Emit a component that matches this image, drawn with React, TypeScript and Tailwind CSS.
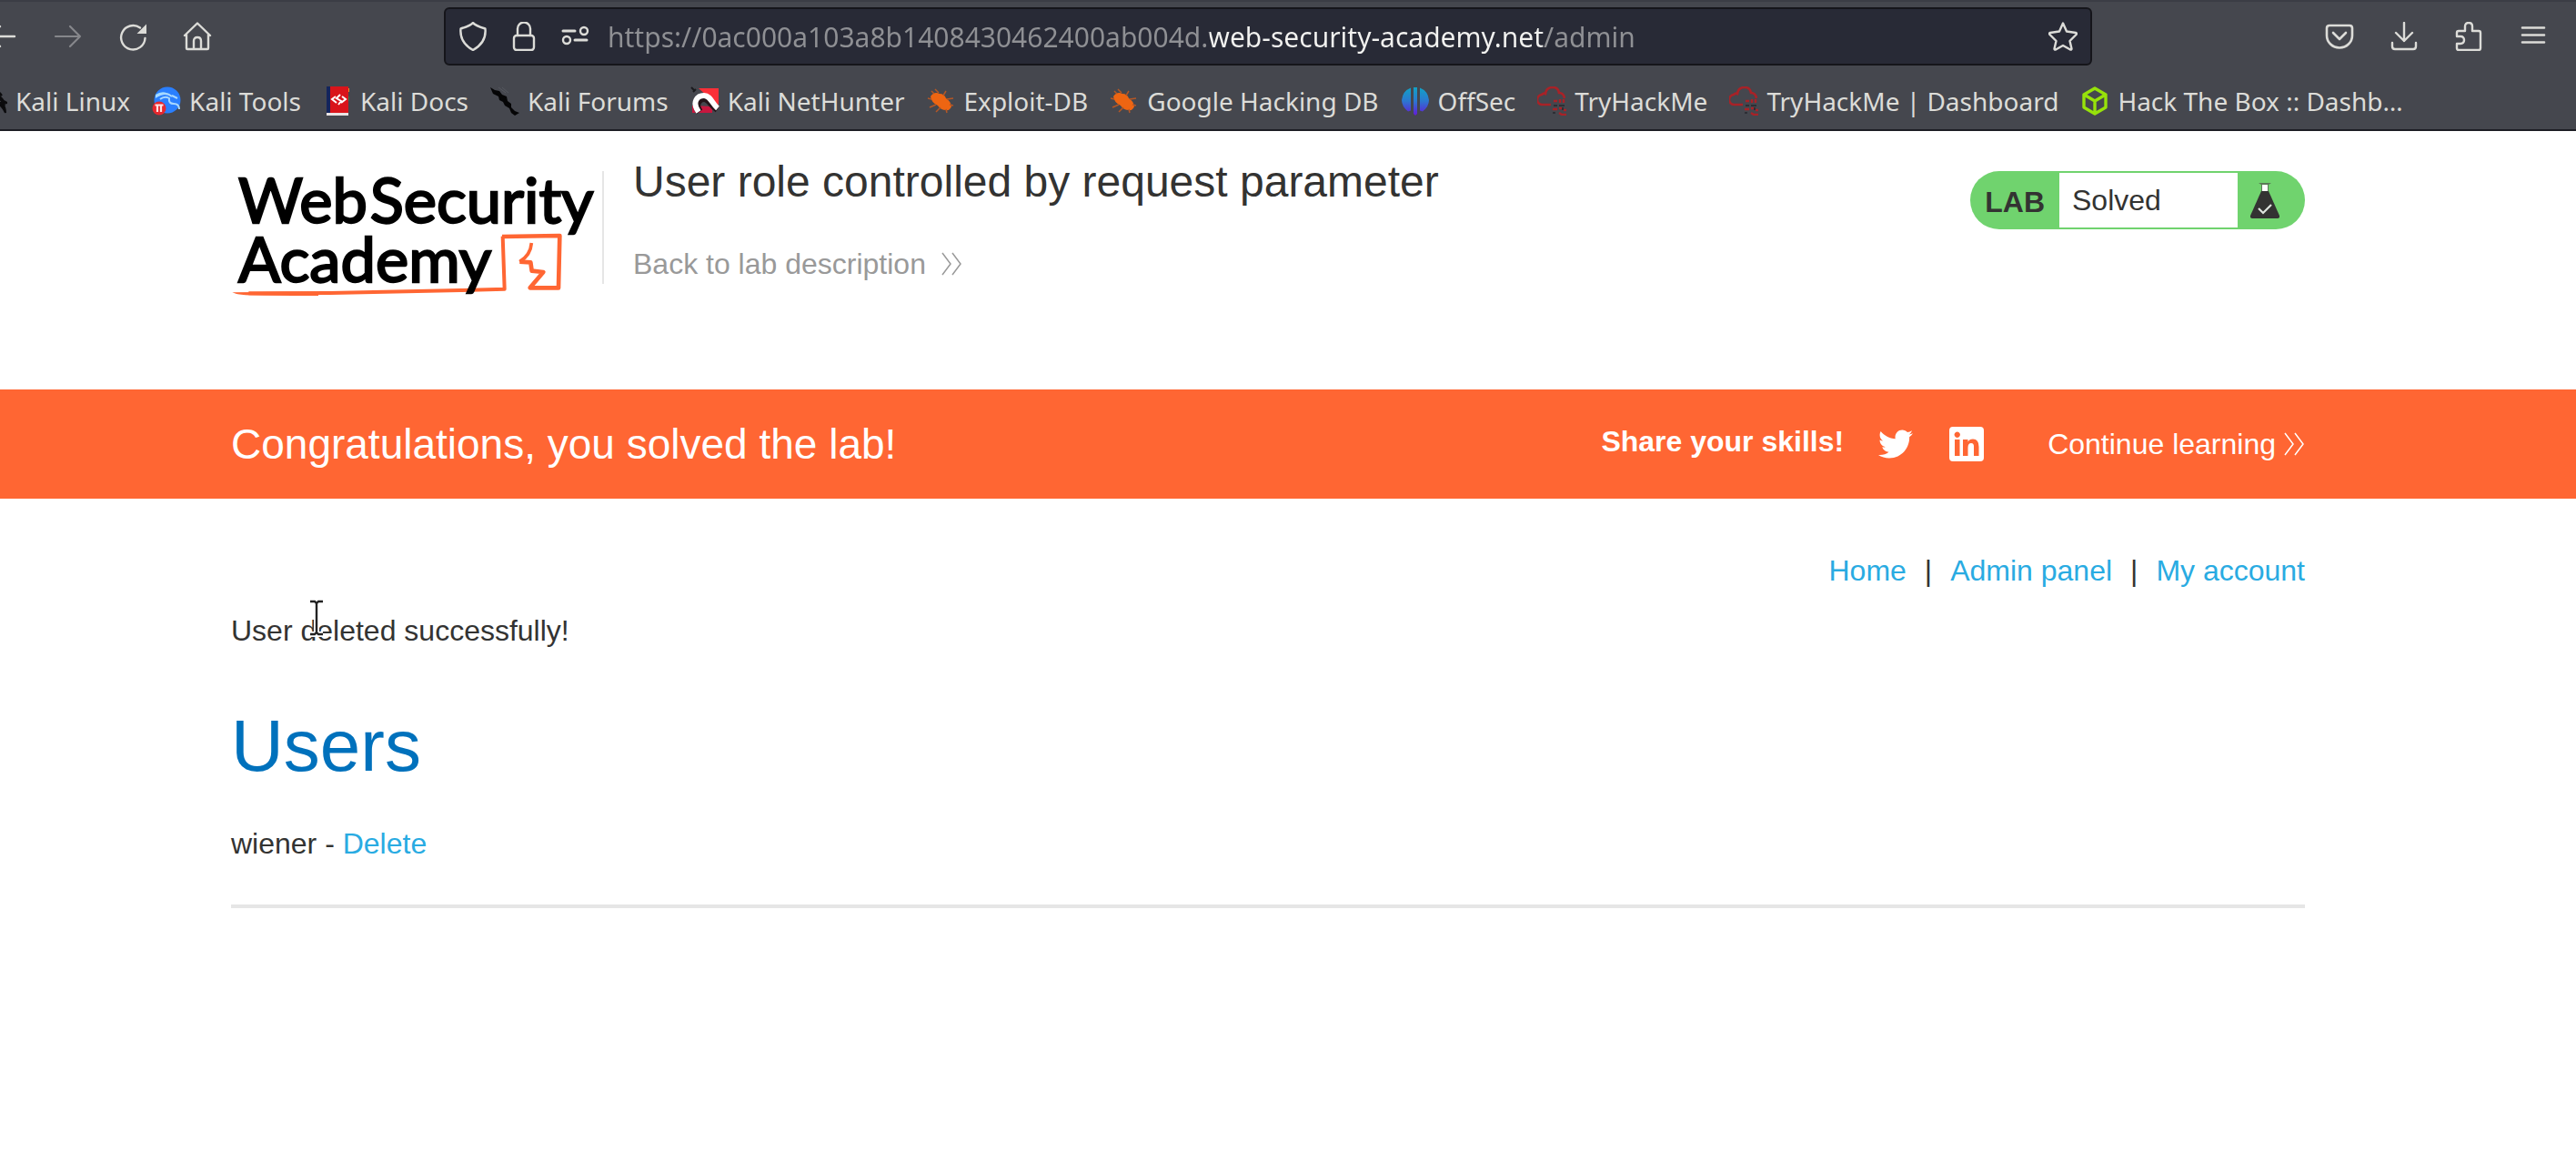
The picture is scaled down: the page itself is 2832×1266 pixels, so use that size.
import type { ReactNode } from "react";
import { FaTwitter } from "react-icons/fa";

const stroke = {
  fill: "none",
  stroke: "currentColor",
  strokeWidth: 2.4,
  strokeLinecap: "round" as const,
  strokeLinejoin: "round" as const,
};

function Icon({ children }: { children: ReactNode }) {
  return (
    <svg viewBox="0 0 32 32" className="size-8 shrink-0" aria-hidden="true">
      {children}
    </svg>
  );
}

const BackIcon = () => (
  <Icon>
    <path {...stroke} d="M28 16H2M12 5 1 16l11 11" />
  </Icon>
);
const ForwardIcon = () => (
  <Icon>
    <path {...stroke} strokeWidth={2.2} d="M2 16h27M18 5l11 11-11 11" />
  </Icon>
);
const ReloadIcon = () => (
  <Icon>
    <path {...stroke} d="M29.500 18A13.200 13.200 0 1 1 24 6.500" />
    <path fill="currentColor" d="M31 2.500v10.500h-10.500z" />
  </Icon>
);
const HomeIcon = () => (
  <Icon>
    <path {...stroke} d="M2 15 16 1.500 30 15M4 14v15q0 1 1 1h22q1 0 1-1V14M12 30V21q0-4 4-4t4 4v9" />
  </Icon>
);
const ShieldIcon = () => (
  <Icon>
    <path {...stroke} d="M16 1Q18 4 29.500 7.500C30.500 18 25 26 16 31 7 26 1.500 18 2.500 7.500 14 4 16 1 16 1z" />
  </Icon>
);
const LockIcon = () => (
  <Icon>
    <rect {...stroke} x="5" y="15" width="22" height="16" rx="3" />
    <path {...stroke} d="M9 15V7.500a7 7 0 0 1 14 0V15" />
  </Icon>
);
const PermissionsIcon = () => (
  <Icon>
    <circle {...stroke} cx="26" cy="10" r="4" />
    <circle {...stroke} cx="7" cy="20" r="4" />
    <path {...stroke} strokeWidth={3} d="M3 10h13M16 20h13" />
  </Icon>
);
const StarIcon = () => (
  <Icon>
    <path
      {...stroke}
      d="M16 1.500 20 10.500 30 12q1.500.5.5 2l-7 7 2 8.500q0 1.500-1.500 1L16 26l-8 4.500q-1.500.5-1.500-1l2-8.500-7-7q-1-1.500.5-2l10-1.500z"
    />
  </Icon>
);
const PocketIcon = () => (
  <Icon>
    <path {...stroke} strokeWidth={2.6} d="M5 4h22q3 0 3 3v8a14 13.500 0 0 1-28 0V7q0-3 3-3zM9 12l7 7 7-7" />
  </Icon>
);
const DownloadIcon = () => (
  <Icon>
    <path {...stroke} d="M16 1v20M7 12l9 9 9-9M3 23v4q0 3 3 3h20q3 0 3-3v-4" />
  </Icon>
);
const PuzzleIcon = () => (
  <Icon>
    <path
      {...stroke}
      d="M3 12q0-2 2-2h7V5q0-4 4-4t4 4v5h7q2 0 2 2v17q0 2-2 2H5q-2 0-2-2v-5h4q4 0 4-4t-4-4H3z"
    />
  </Icon>
);
const MenuIcon = () => (
  <Icon>
    <path {...stroke} strokeWidth={2.6} d="M4 6.500h24M4 14.500h24M4 22.500h24" />
  </Icon>
);

const KaliLinuxMark = () => (
  <Icon>
    <path
      d="M14 2q8 2 12 8-6-4-10-4 8 4 12 10l4 2-5 1q3 4 3 10-4-10-16-14l14 4q-5-8-16-12z"
      fill="#0b0b0d"
      stroke="#0b0b0d"
      strokeWidth="2"
    />
  </Icon>
);
const KaliToolsMark = () => (
  <Icon>
    <circle cx="17" cy="15" r="14.500" fill="#2a7fff" />
    <path d="M4 9q9-6 17 1-8-4-17 3z" fill="#9fdcff" />
    <path
      d="M5 11q10-6 17 0M9 14q5-4 10-1-1 6 5 6t6 6M22 10l6 3"
      fill="none"
      stroke="#a8d8ff"
      strokeWidth="2"
    />
    <circle cx="8" cy="24" r="7.500" fill="#e5282e" />
    <path d="M3.500 20.500h9M6 20.500V28M10 20.500V28" stroke="#ffe3e3" strokeWidth="2.200" fill="none" />
  </Icon>
);
const KaliDocsMark = () => (
  <Icon>
    <path d="M4 0h4v29H4z" fill="#14245c" />
    <path d="M8 0h20v29H8z" fill="#d9141a" />
    <path d="M28 2h1v4h-1z" fill="#f08a24" />
    <path d="M28 11h1v5h-1z" fill="#2c7a4b" />
    <path d="M4 29h24v3H4z" fill="#e9e3e3" />
    <path d="m14 11-4 3 5 4M21 11l4 3-5 4M19 9l-4 4 5 3-3 4" fill="none" stroke="#fff" strokeWidth="2" />
  </Icon>
);
const KaliForumsMark = () => (
  <Icon>
    <path
      d="M0 1l5 3 5 1 3 4 5 2 1 5 4 3v4l4 4 5 2-5 3-4-3-2-5-5-3-2-4-4-2-1-4-6-3z"
      fill="#050506"
    />
    <path d="m9 1 8 6M13 1l7 6" stroke="#55585f" strokeWidth="1" />
  </Icon>
);
const NetHunterMark = () => (
  <Icon>
    <path d="m1 1 3 3M3 6l3-3" stroke="#1a1a1d" strokeWidth="2" />
    <path d="M9 2h22v20z" fill="#fb3038" />
    <path d="M24 22v7H2v-8z" fill="#c8173f" />
    <path
      d="M10 28C4 20 9 13 15 13c5 0 8 7 15 12"
      fill="none"
      stroke="#25151a"
      strokeWidth="8"
    />
    <path
      d="M9 28C1 17 8 10 15 10c7 0 9 9 15 14"
      fill="none"
      stroke="#fff"
      strokeWidth="6"
    />
  </Icon>
);
const ExploitMark = () => (
  <Icon>
    <path
      d="M4 11q4-6 10-3 5 0 7 5 5 3 6 9-2 5-6 4-6 0-9-5-7-3-8-10z"
      fill="#ee6512"
    />
    <path
      d="M8 8 5 5M13 7 9 3M18 10l3-5M22 14l7-1M25 20l4 1M21 25l1 4M15 23l-5 5M10 20l-7 3M5 14l-4-1"
      stroke="#b45726"
      strokeWidth="1.500"
    />
  </Icon>
);
const OffSecMark = () => (
  <Icon>
    <defs>
      <linearGradient id="offsec" x1="0" y1="0" x2="0" y2="32" gradientUnits="userSpaceOnUse">
        <stop offset="0" stopColor="#10a5c4" />
        <stop offset="0.5" stopColor="#2b78d0" />
        <stop offset="1" stopColor="#6419d8" />
      </linearGradient>
    </defs>
    <path
      d="M11 1.500v25l-3 1Q1 22 1 15 2 5 11 1.500zM21 1.500v25l3 1q7-5.500 7-12.500Q30 5 21 1.500zM14 1h4v29l-2 2-2-2z"
      fill="url(#offsec)"
    />
  </Icon>
);
const TryHackMeMark = () => (
  <Icon>
    <path
      d="M15 20H6a5.500 5.500 0 0 1-1-11Q7 7 9 8q1-7 8-7 6 0 7 6 5 0 6 6"
      fill="none"
      stroke="#a82227"
      strokeWidth="2.600"
    />
    <path
      d="M18 16h4M25 14v4M29 14v4M17 25h5M24 24h3M24 29l3 2h5M29 26h3"
      stroke="#a82227"
      strokeWidth="2.400"
      fill="none"
    />
    <path d="M18 21h4M24 21h6M17 29h3M28 23v3" stroke="#2d2f35" strokeWidth="2" />
  </Icon>
);
const HackTheBoxMark = () => (
  <Icon>
    <path
      d="M16 2 28 9v14l-12 7L4 23V9zM5 9.500 16 16l11-6.500M16 16v13"
      fill="none"
      stroke="#97e20a"
      strokeWidth="3.400"
      strokeLinejoin="round"
    />
  </Icon>
);

const bookmarks = [
  { label: "Kali Linux", icon: <KaliLinuxMark /> },
  { label: "Kali Tools", icon: <KaliToolsMark /> },
  { label: "Kali Docs", icon: <KaliDocsMark /> },
  { label: "Kali Forums", icon: <KaliForumsMark /> },
  { label: "Kali NetHunter", icon: <NetHunterMark /> },
  { label: "Exploit-DB", icon: <ExploitMark /> },
  { label: "Google Hacking DB", icon: <ExploitMark /> },
  { label: "OffSec", icon: <OffSecMark /> },
  { label: "TryHackMe", icon: <TryHackMeMark /> },
  { label: "TryHackMe | Dashboard", icon: <TryHackMeMark /> },
  { label: "Hack The Box :: Dashb…", icon: <HackTheBoxMark /> },
];

function ToolButton({ label, disabled, children }: { label: string; disabled?: boolean; children: ReactNode }) {
  return (
    <button
      type="button"
      aria-label={label}
      disabled={disabled}
      className="flex h-16 w-[71px] shrink-0 items-center justify-center disabled:text-[#86878b]"
    >
      {children}
    </button>
  );
}

function BrowserChrome() {
  return (
    <div className="overflow-hidden border-t-2 border-b-2 border-t-[#3b3d45] border-b-[#1d1e24] bg-[#45474e] font-['Noto_Sans',sans-serif] text-[#dcdcd8]">
      <div className="mt-1.5 flex items-center pr-3">
        <nav aria-label="Navigation" className="-ml-8 flex">
          <ToolButton label="Back"><BackIcon /></ToolButton>
          <ToolButton label="Forward" disabled><ForwardIcon /></ToolButton>
          <ToolButton label="Reload"><ReloadIcon /></ToolButton>
          <ToolButton label="Home"><HomeIcon /></ToolButton>
        </nav>
        <div className="mx-[236px] flex h-16 min-w-0 flex-1 items-center gap-6 rounded-md border-2 border-[#15151a] bg-[#282a36] px-3.5">
          <ShieldIcon />
          <LockIcon />
          <PermissionsIcon />
          <input
            type="text"
            aria-label="Address"
            spellCheck={false}
            defaultValue="https://0ac000a103a8b1408430462400ab004d.web-security-academy.net/admin"
            className="-ml-1 h-12 min-w-0 flex-1 bg-linear-[90deg,#8f9094_662px,#f2f2f0_662px,#f2f2f0_1029px,#8f9094_1029px] bg-clip-text text-[30px] text-transparent outline-none"
          />
          <button type="button" aria-label="Bookmark this page"><StarIcon /></button>
        </div>
        <div className="flex">
          <ToolButton label="Save to Pocket"><PocketIcon /></ToolButton>
          <ToolButton label="Downloads"><DownloadIcon /></ToolButton>
          <ToolButton label="Extensions"><PuzzleIcon /></ToolButton>
          <ToolButton label="Menu"><MenuIcon /></ToolButton>
        </div>
      </div>
      <ul className="mt-2 -ml-6 flex h-[62px] items-center gap-6 text-[28px] whitespace-nowrap">
        {bookmarks.map((b) => (
          <li key={b.label}>
            <a href="#" className="flex items-center gap-[9px]">
              {b.icon}
              {b.label}
            </a>
          </li>
        ))}
      </ul>
    </div>
  );
}

function AcademyLogo() {
  return (
    <svg
      viewBox="42 50 1206 432"
      className="h-36 w-[402px] shrink-0 overflow-visible"
      role="img"
      aria-label="Web Security Academy"
    >
      <g fill="none" stroke="#ff6633" strokeLinejoin="round">
        <path d="M100 456 370 455 800 446 944 442 938 268" strokeWidth="12" />
        <path d="M936 269 1126 266 1122 438 1028 438 1072 386 1034 382 1030 354 994 352" strokeWidth="14" />
        <path d="M994 352Q1030 330 1033 290" strokeWidth="11" />
      </g>
      <path d="M46 453Q200 450 330 452V464Q150 464 90 462 60 460 46 453z" fill="#ff6633" />
      <g
        fontFamily="Lato, sans-serif"
        fontSize="206"
        fill="#000"
        stroke="#000"
        strokeWidth="7"
      >
        <text x="66" y="224">Web</text>
        <text x="500" y="224">Security</text>
        <text x="66" y="418">Academy</text>
      </g>
    </svg>
  );
}

const DoubleChevron = () => (
  <svg viewBox="0 0 24 26" className="h-[26px] w-6" aria-hidden="true">
    <path d="M2 1 11 13 2 25M13 1l9 12-9 12" fill="none" stroke="currentColor" strokeWidth="1.500" />
  </svg>
);

function FlaskIcon() {
  return (
    <svg viewBox="0 0 32 40" className="h-10 w-8" aria-hidden="true">
      <path d="M12.500 2h7v9h-7z" fill="#fff" />
      <path d="M9 1h14l-3 2v7h-1V3h-6v7h-1V3z" fill="#5a7a57" />
      <path d="M12 10h8l12 27q.5 3-2.500 3H2.500Q-.5 40 0 37z" fill="#333332" />
      <path d="m9 29 5 5 9-9" fill="none" stroke="#dfe5df" strokeWidth="2.200" />
    </svg>
  );
}

const TextCursor = () => (
  <svg viewBox="0 0 20 46" className="absolute -top-4 left-[84px] h-[46px] w-5" aria-hidden="true">
    <path d="M3 4h5l2 2 2-2h5M10 6v32M3 40h5l2-2 2 2h5" fill="none" stroke="#fff" strokeWidth="6" />
    <path d="M3 4h5l2 2 2-2h5M10 6v32M3 40h5l2-2 2 2h5" fill="none" stroke="#222" strokeWidth="2.400" />
  </svg>
);

export default function App() {
  return (
    <div className="min-h-screen bg-white font-['Liberation_Sans',Arial,sans-serif] text-[32px] leading-10 text-[#333332]">
      <BrowserChrome />

      <header className="flex items-start pt-7 pr-[298px] pb-[97px] pl-[254px]">
        <a href="#" className="mt-[15px]"><AcademyLogo /></a>
        <div className="mt-4 mr-8 ml-1.5 h-[124px] w-0.5 bg-[#e6e6e6]" />
        <div className="flex-1">
          <h1 className="text-[48px] leading-[56px]">User role controlled by request parameter</h1>
          <a href="#" className="mt-[42px] flex items-center gap-4 text-[#999999]">
            Back to lab description
            <DoubleChevron />
          </a>
        </div>
        <div className="mt-4 flex h-16 w-[368px] items-stretch overflow-hidden rounded-full bg-[#70d36e] py-0.5">
          <span className="flex w-[98px] items-center justify-end pt-1 pr-4 font-bold">LAB</span>
          <span className="flex flex-1 items-center bg-white pl-3.5">Solved</span>
          <span className="flex w-[74px] items-center pl-3.5"><FlaskIcon /></span>
        </div>
      </header>

      <section className="flex h-[120px] items-center bg-[#ff6633] pr-[298px] pl-[254px] text-white">
        <h2 className="flex-1 text-[46px] leading-[56px]">Congratulations, you solved the lab!</h2>
        <span className="pb-1.5 font-bold">Share your skills!</span>
        <a href="#" aria-label="Share on Twitter" className="ml-[38px]"><FaTwitter className="size-[38px]" /></a>
        <a href="#" aria-label="Share on LinkedIn" className="ml-10">
          <svg viewBox="0 0 38 38" className="size-[38px]" aria-hidden="true">
            <path
              fill="#fff"
              fillRule="evenodd"
              d="M4 0h30q4 0 4 4v30q0 4-4 4H4q-4 0-4-4V4q0-4 4-4zM6 14v18h5.500V14zM8.700 5.500a3.200 3.200 0 1 0 .1 0zM15 14v18h5.500v-9q0-5 3.500-5t3 5v9H32.500V22q0-8.500-6.500-8.500-4 0-5.500 3V14z"
            />
          </svg>
        </a>
        <a href="#" className="ml-[70px] flex items-center gap-2">
          Continue learning
          <DoubleChevron />
        </a>
      </section>

      <main className="flex flex-col pt-[59px] pr-[298px] pl-[254px]">
        <nav aria-label="Account" className="flex justify-end gap-5">
          <a href="#" className="text-[#29abe2]">Home</a>
          <span>|</span>
          <a href="#" className="text-[#29abe2]">Admin panel</a>
          <span>|</span>
          <a href="#" className="text-[#29abe2]">My account</a>
        </nav>
        <p className="relative mt-[26px]">
          User deleted successfully!
          <TextCursor />
        </p>
        <h2 className="mt-[59px] text-[80px] leading-[96px] text-[#0071bc]">Users</h2>
        <p className="mt-[39px]">
          wiener - <a href="#" className="text-[#29abe2]">Delete</a>
        </p>
        <hr className="mt-[47px] border-t-4 border-[#e6e6e6]" />
      </main>
    </div>
  );
}
